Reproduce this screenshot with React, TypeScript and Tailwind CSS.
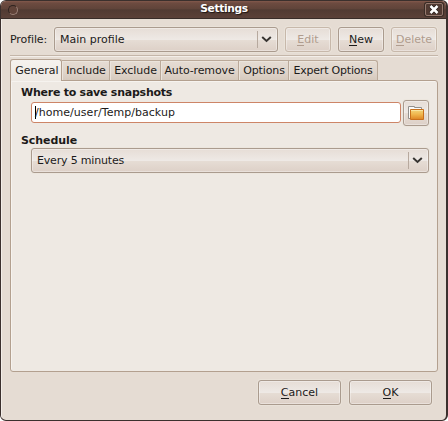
import React from "react";

const raised =
  "rounded-[3px] border border-[#aa9b8e] bg-[linear-gradient(to_bottom,#e6ddd6_0%,#eee9e5_50%,#e6ddd5_51%,#ddd0c7_100%)] shadow-[inset_0_0_0_1px_rgba(255,255,255,0.35),0_0_0_1px_rgba(235,228,220,0.7)]";

type ButtonProps = { label: string; size: string; disabled?: boolean };

function Button({ label, size, disabled = false }: ButtonProps) {
  return (
    <button
      disabled={disabled}
      className={`flex h-[25px] shrink-0 items-center justify-center ${raised} ${size} ${
        disabled ? "border-[#c7b8aa] text-[#b09c8e]" : ""
      }`}
    >
      <span className="leading-[13px]">
        <span className="inline-block h-[13px] border-b border-current">{label[0]}</span>
        {label.slice(1)}
      </span>
    </button>
  );
}

type ComboProps = { value: string; size: string };

function Combo({ value, size }: ComboProps) {
  return (
    <div className={`flex h-[25px] items-center pl-[5px] ${raised} ${size}`}>
      <span className="flex-1">{value}</span>
      <span className="h-[17px] w-px bg-[#b7a99e]" />
      <svg className="mr-[5px] ml-[3px]" width="11" height="7" viewBox="0 0 11 7" fill="none">
        <path d="M1.2 1 L5.5 4.9 L9.8 1" stroke="#383532" strokeWidth="2" />
      </svg>
    </div>
  );
}

function FolderIcon() {
  return (
    <svg width="18" height="16" viewBox="0 0 18 16">
      <defs>
        <linearGradient id="folder" x1="0" y1="0" x2="0" y2="1">
          <stop offset="0" stopColor="#f3d77d" />
          <stop offset="0.5" stopColor="#efb54c" />
          <stop offset="1" stopColor="#dd8423" />
        </linearGradient>
      </defs>
      <path d="M1.5 13.5V1.5H7.5V2.5H14.5V13.5Z" fill="#fbfaf8" stroke="#92908d" />
      <path d="M3.5 4.5H16.5V14.5H3.5Z" fill="url(#folder)" stroke="#c9701b" />
      <path d="M4 5.5H16" stroke="#f9e5a0" />
    </svg>
  );
}

const tabs = [
  { name: "Include", size: "w-[48px] pl-px tracking-[-0.05px]" },
  { name: "Exclude", size: "w-[51px] pl-px tracking-[-0.05px]" },
  { name: "Auto-remove", size: "w-[78px] tracking-[-0.13px]" },
  { name: "Options", size: "w-[50px] pl-px tracking-[-0.1px]" },
  { name: "Expert Options", size: "w-[89px] tracking-[-0.2px]" },
];

export default function App() {
  return (
    <div className="h-[421px] w-[448px] bg-white font-['DejaVu_Sans',sans-serif] text-[11px] leading-[13px] text-[#1c1a19]">
      <div className="flex h-[421px] w-[448px] flex-col overflow-hidden rounded-[6px] border border-r-2 border-[#3b302d] bg-[#e5dcd3]">
        <header className="flex h-[18px] shrink-0 items-center border-b border-[#382d29] bg-[linear-gradient(to_bottom,#83594c_0%,#6d4b40_12%,#60443a_45%,#513b33_52%,#5b4138_100%)] pr-[3px] pl-[7px]">
          <span className="h-[10px] w-[10px] rounded-full border border-[#2f2420] border-r-[#9c8278] border-b-[#9c8278] bg-[#604339]" />
          <h1 className="flex-1 pb-[2px] pl-[5px] text-center text-[10.67px] font-bold tracking-[-0.33px] text-white [text-shadow:1px_1px_1px_#1e1512]">
            Settings
          </h1>
          <button className="flex h-[13px] w-[18px] items-center justify-center rounded-[2px] border border-[#94786d] bg-[#513a32] shadow-[0_0_0_1px_#3a2c26]">
            <svg width="10" height="9" viewBox="0 0 10 9">
              <path d="M1.5 1L8.5 8M8.5 1L1.5 8" stroke="#251b17" strokeWidth="4" />
              <path d="M1.5 1L8.5 8M8.5 1L1.5 8" stroke="#fff" strokeWidth="2.6" />
            </svg>
          </button>
        </header>
        <main className="flex flex-1 flex-col border-l border-[#f3eee9] pt-[8px] pr-[8px] pl-[8px]">
          <div className="flex items-center">
            <span className="w-[44px] tracking-[-0.1px]">Profile:</span>
            <Combo value="Main profile" size="w-[224px]" />
            <div className="ml-[7px] flex gap-[7px]">
              <Button label="Edit" size="w-[46px]" disabled />
              <Button label="New" size="w-[46px]" />
              <Button label="Delete" size="w-[46px]" disabled />
            </div>
          </div>
          <div className="mt-[3px] h-[2px] border-t border-b border-t-[#c4b6a9] border-b-[#f3eee9]" />
          <nav className="mt-[2px] flex h-[21px] items-end">
            <div className="z-10 -mb-px flex h-[22px] w-[52px] items-center justify-center rounded-t-[3px] border border-b-0 border-[#b3a08f] bg-[linear-gradient(to_bottom,#f5f2ee,#eee9e3)] pb-px pl-[2px]">
              General
            </div>
            {tabs.map((tab) => (
              <div
                key={tab.name}
                className={`flex h-[20px] items-center justify-center border-t border-r border-[#baa999] bg-[linear-gradient(to_bottom,#e5dcd3,#dfd4ca_60%,#d6c9bd)] whitespace-nowrap shadow-[inset_1px_1px_0_#ebe4dc] last:rounded-tr-[3px] ${tab.size}`}
              >
                {tab.name}
              </div>
            ))}
          </nav>
          <section className="h-[292px] rounded-tr-[3px] rounded-b-[3px] border border-[#b3a08f] bg-[#eee9e3] pt-[5px] pr-[8px] pl-[10px] shadow-[inset_1px_1px_0_#f6f3ef]">
            <h2 className="font-bold tracking-[-0.24px]">Where to save snapshots</h2>
            <div className="mt-[1px] flex h-[26px] items-start justify-between pl-[10px]">
              <div className="mt-[2px] flex h-[21px] w-[370px] items-center rounded-[3px] border border-[#cd8567] bg-white pl-[3px]">
                <span className="-mr-px h-[13px] w-px bg-black" />
                <span className="tracking-[0.04px]">/home/user/Temp/backup</span>
              </div>
              <button className={`flex h-[26px] w-[26px] items-center justify-center ${raised}`}>
                <FolderIcon />
              </button>
            </div>
            <h2 className="mt-[8px] font-bold tracking-[-0.08px]">Schedule</h2>
            <div className="mt-[1px] pl-[10px] tracking-[-0.18px]">
              <Combo value="Every 5 minutes" size="w-full" />
            </div>
          </section>
          <footer className="mt-[8px] flex justify-end gap-[8px] pr-[6px]">
            <Button label="Cancel" size="w-[83px]" />
            <Button label="OK" size="w-[83px]" />
          </footer>
        </main>
      </div>
    </div>
  );
}
